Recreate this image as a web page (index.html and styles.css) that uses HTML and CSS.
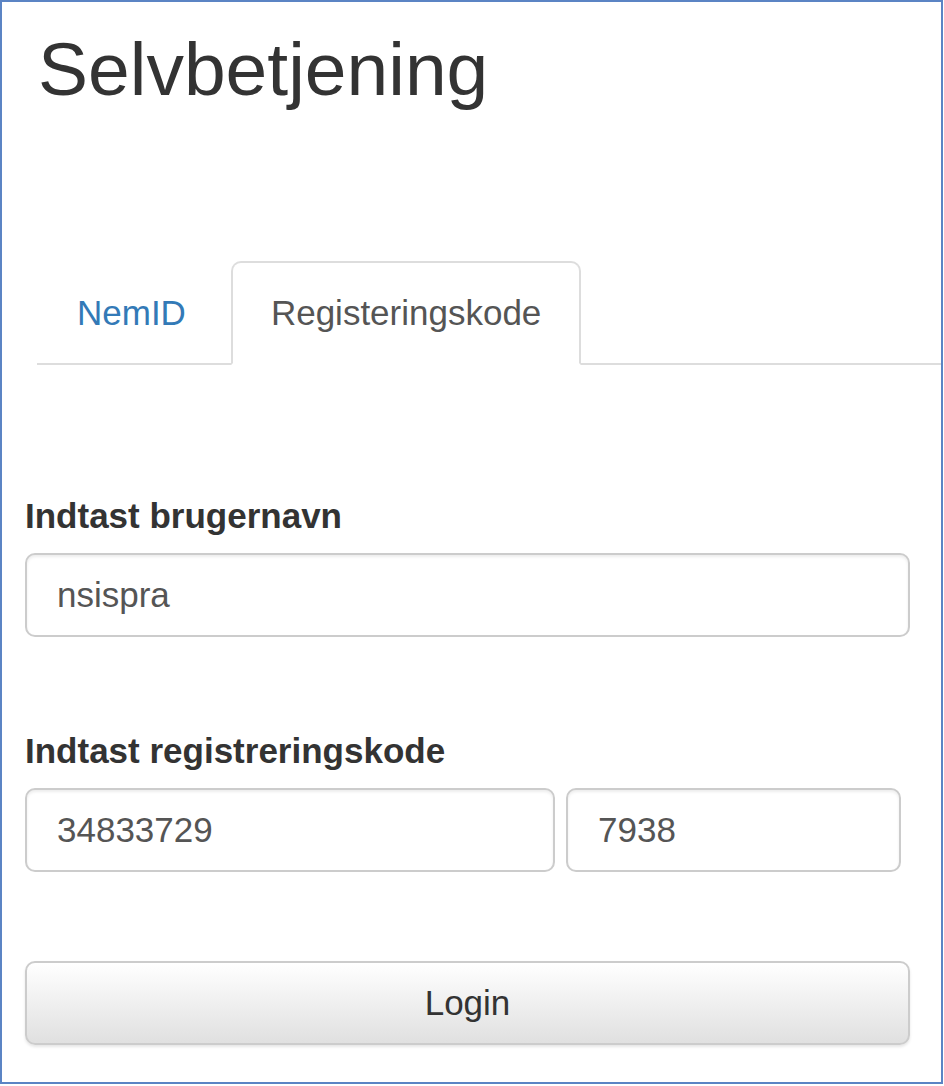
FILE: index.html
```html
<!DOCTYPE html>
<html lang="da">
<head>
<meta charset="utf-8">
<title>Selvbetjening</title>
<link rel="stylesheet" href="styles.css">
</head>
<body>
<div class="frame">
  <h1 class="title">Selvbetjening</h1>
  <ul class="tabs">
    <li class="tab"><a class="tab-link">NemID</a></li>
    <li class="tab active"><a class="tab-link">Registeringskode</a></li>
  </ul>
  <form class="form">
    <div class="group group-first">
      <label class="label">Indtast brugernavn</label>
      <input class="input" type="text" value="nsispra">
    </div>
    <div class="group">
      <label class="label">Indtast registreringskode</label>
      <div class="row">
        <input class="input" type="text" value="34833729">
        <input class="input" type="text" value="7938">
      </div>
    </div>
    <button class="btn" type="button">Login</button>
  </form>
</div>
</body>
</html>
```

FILE: styles.css
```css
* { box-sizing: border-box; }
html, body { margin: 0; padding: 0; background: #fff; }
body { font-family: "Liberation Sans", Arial, Helvetica, sans-serif; color: #333; }

.frame {
  width: 943px;
  height: 1084px;
  border: 2px solid #5b84c4;
  background: #fff;
}

.title {
  margin: 25px 0 0 0;
  padding-left: 36px;
  font-size: 75px;
  line-height: 84px;
  font-weight: 400;
  color: #333;
}

.tabs {
  list-style: none;
  margin: 150px 0 0 35px;
  padding: 0;
  display: flex;
  border-bottom: 2px solid #ddd;
}
.tab { margin-bottom: -2px; margin-right: 5px; }
.tab-link {
  display: block;
  padding: 25px 38px;
  font-size: 35px;
  line-height: 50px;
  color: #337ab7;
  border: 2px solid transparent;
  border-radius: 10px 10px 0 0;
}
.tab.active .tab-link {
  color: #555;
  background: #fff;
  border-color: #ddd;
  border-bottom-color: transparent;
}

.form { padding: 0 31px 0 23px; }
.group { margin-top: 89px; }
.group-first { margin-top: 126px; }
.label {
  display: block;
  font-size: 35px;
  line-height: 50px;
  font-weight: 700;
  color: #333;
  margin-bottom: 12px;
}
.input {
  display: block;
  width: 100%;
  height: 84px;
  padding: 0 30px;
  font-family: "Liberation Sans", Arial, sans-serif;
  font-size: 35px;
  color: #555;
  background: #fff;
  border: 2px solid #ccc;
  border-radius: 10px;
  box-shadow: inset 0 2px 3px rgba(0,0,0,.075);
  outline: none;
}
.row {
  display: grid;
  grid-template-columns: 530px 335px;
  column-gap: 11px;
}
.btn {
  display: block;
  width: 100%;
  height: 84px;
  margin-top: 89px;
  font-family: "Liberation Sans", Arial, sans-serif;
  font-size: 35px;
  color: #333;
  background: linear-gradient(to bottom, #fff 0%, #e0e0e0 100%);
  border: 2px solid #ccc;
  border-radius: 10px;
  box-shadow: inset 0 2px 0 rgba(255,255,255,.15), 0 2px 3px rgba(0,0,0,.1);
}
```
